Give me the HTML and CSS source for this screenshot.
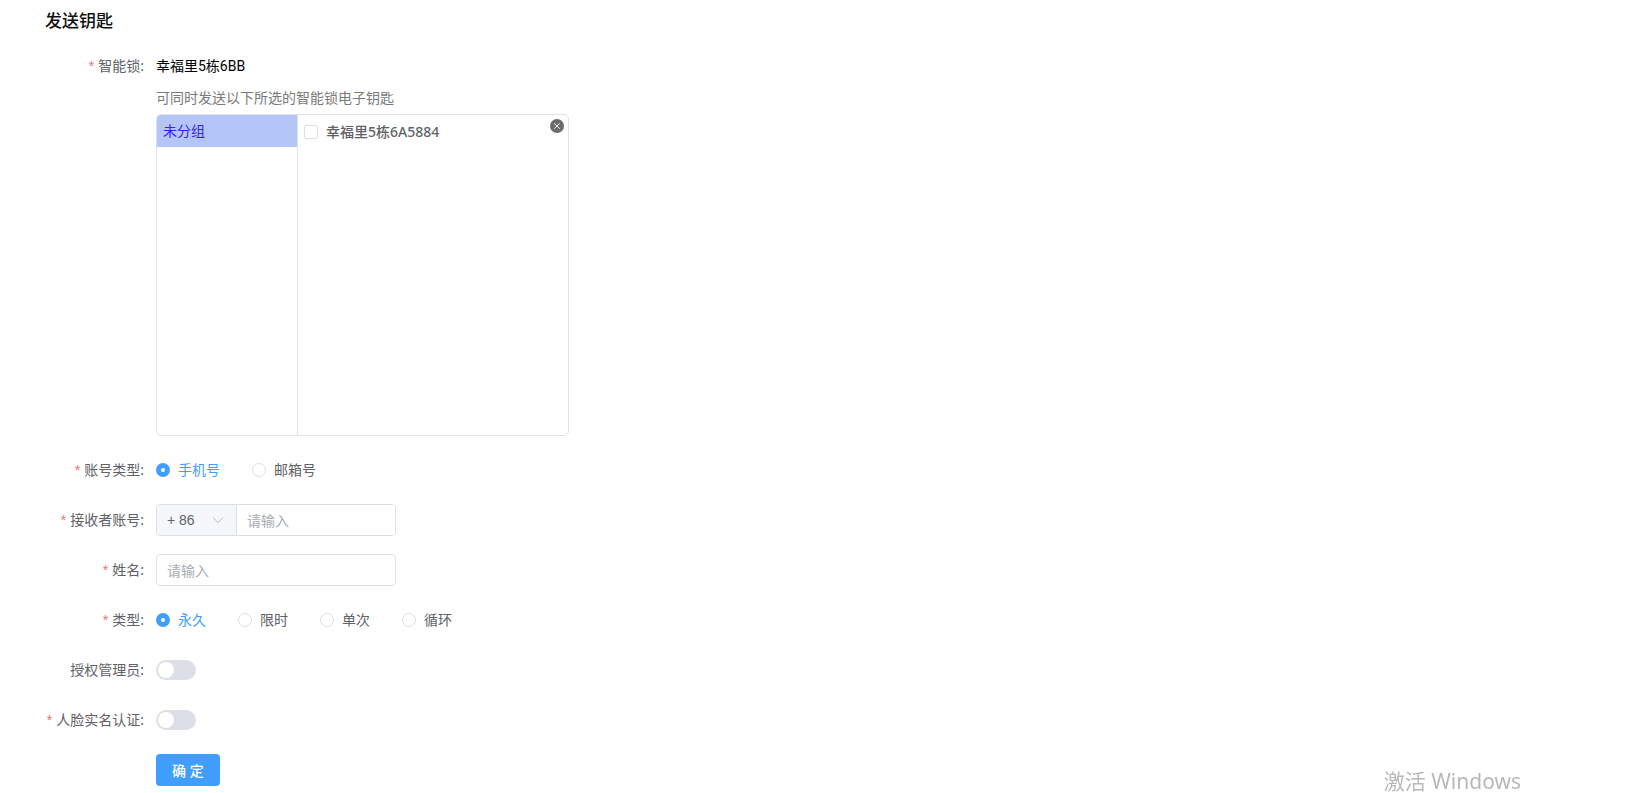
FILE: index.html
```html
<!DOCTYPE html>
<html lang="zh-CN">
<head>
    <meta charset="UTF-8">
    <meta name="viewport" content="width=device-width, initial-scale=1.0">
    <title>发送钥匙</title>
    <link rel="stylesheet" href="styles.css">
</head>
<body>

<h1 class="title">发送钥匙</h1>

<form class="form">
    <!-- 智能锁 -->
    <div class="form-item">
        <span class="label required">智能锁:</span>
        <div class="content">
            <div class="lock-name">幸福里5栋6BB</div>
            <div class="tip">可同时发送以下所选的智能锁电子钥匙</div>
            <div class="lock-box">
                <ul class="groups">
                    <li class="active">未分组</li>
                </ul>
                <div class="locks">
                    <label class="check"><input type="checkbox" name="lock">幸福里5栋6A5884</label>
                </div>
                <button type="button" class="close" aria-label="关闭">
                    <svg width="14" height="14" viewBox="0 0 14 14">
                        <circle cx="7" cy="7" r="7" fill="#6b6b6b"/>
                        <path d="M4.2 4.2l5.6 5.6M9.8 4.2l-5.6 5.6" stroke="#fff" stroke-width="0.9" fill="none"/>
                    </svg>
                </button>
            </div>
        </div>
    </div>

    <!-- 账号类型 -->
    <div class="form-item">
        <span class="label required">账号类型:</span>
        <div class="content radios">
            <label class="radio"><input type="radio" name="account" checked><span>手机号</span></label>
            <label class="radio"><input type="radio" name="account"><span>邮箱号</span></label>
        </div>
    </div>

    <div class="form-item">
        <label class="label required" for="phone">接收者账号:</label>
        <div class="content">
            <div class="input-group">
                <div class="prefix">
                    <select aria-label="区号">
                        <option>+ 86</option>
                    </select>
                    <svg class="arrow" width="12" height="12" viewBox="0 0 12 12">
                        <path d="M1 3.5l5 5 5-5" stroke="#b4b8c0" fill="none"/>
                    </svg>
                </div>
                <input type="text" id="phone" placeholder="请输入">
            </div>
        </div>
    </div>

    <div class="form-item">
        <label class="label required" for="name">姓名:</label>
        <div class="content">
            <input type="text" id="name" class="input" placeholder="请输入">
        </div>
    </div>

    <!-- 钥匙类型 -->
    <div class="form-item">
        <span class="label required">类型:</span>
        <div class="content radios">
            <label class="radio"><input type="radio" name="type" checked><span>永久</span></label>
            <label class="radio"><input type="radio" name="type"><span>限时</span></label>
            <label class="radio"><input type="radio" name="type"><span>单次</span></label>
            <label class="radio"><input type="radio" name="type"><span>循环</span></label>
        </div>
    </div>

    <div class="form-item">
        <label class="label" for="admin">授权管理员:</label>
        <div class="content switch-row">
            <input type="checkbox" id="admin" class="switch" role="switch">
        </div>
    </div>

    <div class="form-item">
        <label class="label required" for="face">人脸实名认证:</label>
        <div class="content switch-row">
            <input type="checkbox" id="face" class="switch" role="switch">
        </div>
    </div>

    <div class="form-item">
        <span class="label"></span>
        <div class="content">
            <button type="button" class="btn">确 定</button>
        </div>
    </div>
</form>

<div class="watermark">激活 Windows</div>

</body>
</html>
```
FILE: styles.css
```css
* {
    box-sizing: border-box;
}
body {
    margin: 0;
    background: #fff;
    color: #606266;
    font-family: "Noto Sans", "Noto Sans CJK SC", sans-serif;
    font-size: 14px;
    line-height: 32px;
}
input, select, button {
    margin: 0;
    font-family: inherit;
    font-size: 14px;
}
.title {
    margin: 0;
    padding: 5px 45px 13px;
    color: #111;
    font-size: 17px;
    font-weight: 500;
    line-height: 32px;
}

/* 表单行 */
.form-item {
    display: flex;
    margin-bottom: 18px;
}
.form-item:last-child {
    margin-bottom: 0;
}
.label {
    flex: none;
    width: 156px;
    padding-right: 12px;
    text-align: right;
}
.required::before {
    content: "*";
    margin-right: 4px;
    color: #f56c6c;
    font-family: "Liberation Sans", sans-serif;
}
.content {
    flex: 1;
    min-width: 0;
}
.lock-name {
    color: #000;
    font-family: Roboto, "Noto Sans CJK SC", sans-serif;
}
.tip {
    color: #7a7a7a;
}

/* 智能锁选择框 */
.lock-box {
    position: relative;
    display: flex;
    max-width: 413px;
    height: 322px;
    border: 1px solid #e2e2e2;
    border-radius: 5px;
    overflow: hidden;
}
.groups {
    width: 141px;
    margin: 0;
    padding: 0;
    border-right: 1px solid #e2e2e2;
    list-style: none;
}
.groups li {
    padding: 0 6px;
}
.groups .active {
    background: #b3c6f7;
    color: #3a1cf5;
}
.locks {
    flex: 1;
    padding: 1px 6px;
}
.check {
    display: flex;
    align-items: center;
    gap: 8px;
    font-weight: 500;
}
.check input {
    appearance: none;
    width: 14px;
    height: 14px;
    border: 1px solid #dcdfe6;
    border-radius: 2px;
}
.check input:checked {
    background: #409eff;
    border-color: #409eff;
}
.close {
    position: absolute;
    top: 4px;
    right: 4px;
    display: flex;
    padding: 0;
    border: 0;
    background: none;
    cursor: pointer;
}

/* 单选 */
.radios {
    display: flex;
    gap: 32px;
}
.radio {
    display: flex;
    align-items: center;
    gap: 8px;
}
.radio input {
    appearance: none;
    width: 14px;
    height: 14px;
    border: 1px solid #dcdfe6;
    border-radius: 50%;
}
.radio input:checked {
    border: 5px solid #409eff;
}
.radio input:checked + span {
    color: #409eff;
}

/* 输入框 */
.input, .input-group {
    display: flex;
    width: 240px;
    height: 32px;
    border: 1px solid #dcdfe6;
    border-radius: 4px;
    overflow: hidden;
}
.input, .input-group input {
    padding: 0 10px;
    color: #606266;
    outline: none;
}
.input-group input {
    flex: 1;
    min-width: 0;
    border: 0;
}
::placeholder {
    color: #a8abb2;
}
.prefix {
    position: relative;
    flex: none;
    width: 80px;
    border-right: 1px solid #dcdfe6;
    background: #f5f7fa;
}
.prefix select {
    appearance: none;
    display: block;
    width: 100%;
    height: 30px;
    padding: 0 10px;
    border: 0;
    background: none;
    color: #606266;
    font-family: "Liberation Sans", sans-serif;
}
.arrow {
    position: absolute;
    top: 9px;
    right: 12px;
    pointer-events: none;
}

/* 开关 */
.switch-row {
    display: flex;
    align-items: center;
}
.switch {
    appearance: none;
    display: flex;
    width: 40px;
    height: 20px;
    padding: 2px;
    border-radius: 10px;
    background: #dcdfe6;
}
.switch::before {
    content: "";
    width: 16px;
    height: 16px;
    border-radius: 50%;
    background: #fff;
}
.switch:checked {
    justify-content: flex-end;
    background: #409eff;
}
.btn {
    display: block;
    height: 32px;
    padding: 0 16px;
    border: 0;
    border-radius: 4px;
    background: #409eff;
    color: #fff;
    font-weight: 500;
    cursor: pointer;
}
.watermark {
    position: fixed;
    right: 111px;
    bottom: 0;
    color: #b8b8b8;
    font-size: 21px;
    line-height: 24px;
}
```
